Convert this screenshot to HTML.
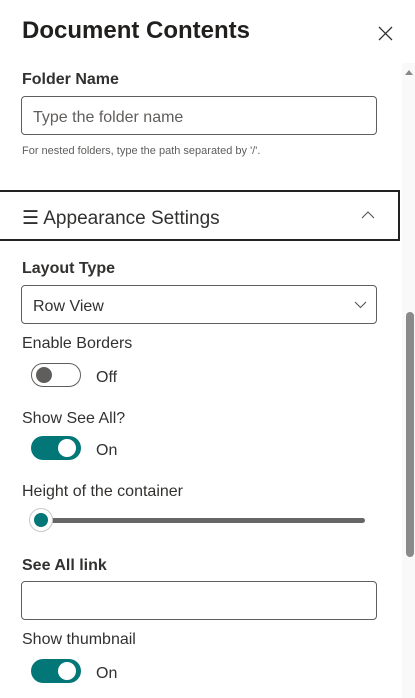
<!DOCTYPE html>
<html><head><style>
body{margin:0;width:415px;height:698px;overflow:hidden;background:#fff;font-family:"Liberation Sans",sans-serif;color:#323130;position:relative}
.a{position:absolute}
.lbl{position:absolute;left:22px;font-size:16px;font-weight:bold;color:#323130}
.t{position:absolute;left:22px;font-size:16px;color:#323130}
.inp{position:absolute;left:21px;width:356px;height:38px;border:1px solid #605e5c;border-radius:4px;box-sizing:border-box}
.tg{position:absolute;left:31px;width:50px;height:24px;border-radius:12px;box-sizing:border-box}
.on{background:#037777}
.on::after{content:"";position:absolute;right:5px;top:3px;width:18px;height:18px;border-radius:50%;background:#fff}
.off{border:1px solid #605e5c;background:#fff}
.off::after{content:"";position:absolute;left:4px;top:3px;width:16px;height:16px;border-radius:50%;background:#605e5c}
.st{position:absolute;left:96px;font-size:16px}
</style></head><body>
<div class="a" style="left:22px;top:17px;font-size:24px;font-weight:bold;color:#201f1e">Document Contents</div>
<svg class="a" style="left:378px;top:26px" width="15" height="15"><path d="M1 1L14 14M14 1L1 14" stroke="#323130" stroke-width="1.3"/></svg>
<div class="a" style="left:402px;top:63px;width:13px;height:635px;background:#f9f9f9"></div>
<svg class="a" style="left:404px;top:68px" width="10" height="8"><path d="M1 7L5 2L9 7Z" fill="#888"/></svg>
<div class="a" style="left:406px;top:312px;width:8px;height:245px;background:#8a8a8a;border-radius:4px"></div>
<div class="lbl" style="top:71px">Folder Name</div>
<div class="inp" style="top:96px;height:39px"></div>
<div class="a" style="left:33px;top:109px;font-size:16px;color:#605e5c">Type the folder name</div>
<div class="a" style="left:22px;top:145px;font-size:11px;color:#605e5c">For nested folders, type the path separated by '/'.</div>
<div class="a" style="left:-2px;top:190px;width:402px;height:51px;border:2px solid #222;box-sizing:border-box"></div>
<div class="a" style="left:22px;top:207px;font-size:19px;color:#323130">☰ Appearance Settings</div>
<svg class="a" style="left:361px;top:210px" width="14" height="9"><path d="M1 8L7 2L13 8" stroke="#555" fill="none" stroke-width="1.1"/></svg>
<div class="lbl" style="top:260px">Layout Type</div>
<div class="inp" style="top:285px;height:39px"></div>
<div class="a" style="left:33px;top:298px;font-size:16px">Row View</div>
<svg class="a" style="left:354px;top:301px" width="13" height="8"><path d="M1 1L6.5 6.5L12 1" stroke="#555" fill="none" stroke-width="1.1"/></svg>
<div class="t" style="top:335px">Enable Borders</div>
<div class="tg off" style="top:363px"></div><div class="st" style="top:369px">Off</div>
<div class="t" style="top:410px">Show See All?</div>
<div class="tg on" style="top:436px"></div><div class="st" style="top:442px">On</div>
<div class="t" style="top:483px">Height of the container</div>
<div class="a" style="left:41px;top:518px;width:324px;height:5px;background:#666;border-radius:3px"></div>
<div class="a" style="left:29px;top:508px;width:24px;height:24px;border-radius:50%;background:#fff;border:1px solid #c8c8c8;box-sizing:border-box"></div>
<div class="a" style="left:34px;top:513px;width:14px;height:14px;border-radius:50%;background:#037777"></div>
<div class="lbl" style="top:557px">See All link</div>
<div class="inp" style="top:581px;height:39px"></div>
<div class="t" style="top:631px">Show thumbnail</div>
<div class="tg on" style="top:659px"></div><div class="st" style="top:665px">On</div>
</body></html>
